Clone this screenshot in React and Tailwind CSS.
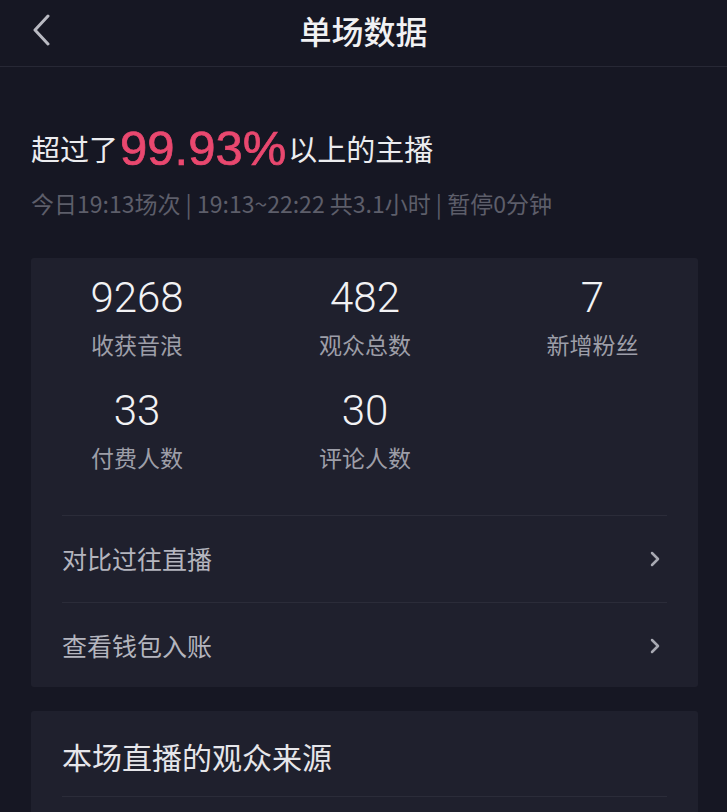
import { ChevronRight } from "lucide-react";

const STATS = [
  [
    { value: "9268", label: "收获音浪" },
    { value: "482", label: "观众总数" },
    { value: "7", label: "新增粉丝" },
  ],
  [
    { value: "33", label: "付费人数" },
    { value: "30", label: "评论人数" },
  ],
];

const COL_WIDTHS = ["w-[212px]", "w-[244px]", "w-[211px]"];

const cjk = "font-['Noto_Sans_CJK_SC',sans-serif]";

function StatRow({ items, className }) {
  return (
    <div className={`flex ${className}`}>
      {items.map((item, i) => (
        <div key={item.label} className={`${COL_WIDTHS[i]} flex flex-col items-center`}>
          <div className="h-[48px] leading-[48px] text-[42px] font-light text-[#f2f2f4] font-['Roboto',sans-serif]">
            {item.value}
          </div>
          <div className={`mt-[7px] h-[30px] leading-[30px] text-[23px] text-[#9d9ea8] ${cjk}`}>
            {item.label}
          </div>
        </div>
      ))}
    </div>
  );
}

function LinkRow({ text }) {
  return (
    <div className="h-[87px] flex items-center justify-between border-t border-[#2b2c39]">
      <span className={`text-[25px] text-[#b4b5be] ${cjk}`}>{text}</span>
      <ChevronRight className="w-6 h-6 text-[#a8a9b2]" strokeWidth={2.5} />
    </div>
  );
}

export default function App() {
  return (
    <div className="w-[727px] h-[812px] overflow-hidden bg-[#161723]">
      {/* header */}
      <div className="relative h-[67px] flex items-center justify-center pb-[6px] border-b border-[#272835]">
        <svg className="absolute left-[31px] top-[14px]" width="20" height="32" viewBox="0 0 20 32" fill="none">
          <path d="M17 2 L4 16 L17 30" stroke="#b9bac2" strokeWidth="3" strokeLinecap="round" strokeLinejoin="round" />
        </svg>
        <h1 className={`text-[32px] text-[#f1f1f3] font-medium ${cjk}`}>单场数据</h1>
      </div>

      <div className="pl-[31px] pr-[29px]">
        {/* headline */}
        <div className={`mt-[58px] h-[48px] flex items-center text-[29px] text-[#ececef] ${cjk}`}>
          <span>超过了</span>
          <span className="text-[49px] text-[#e9486f] font-['Liberation_Sans',sans-serif] [-webkit-text-stroke:0.7px_#e9486f] mx-[2px]">
            99.93%
          </span>
          <span>以上的主播</span>
        </div>
        <div className={`mt-[16px] h-[28px] leading-[28px] text-[23px] text-[#5d5e6a] whitespace-nowrap ${cjk}`}>
          今日19:13场次 | 19:13~22:22 共3.1小时 | 暂停0分钟
        </div>

        {/* stats card */}
        <div className="mt-[41px] h-[429px] bg-[#1f202d] rounded-[3px] pt-[16px]">
          <StatRow items={STATS[0]} />
          <StatRow items={STATS[1]} className="mt-[28px]" />
          <div className="mt-[43px] mx-[31px]">
            <LinkRow text="对比过往直播" />
            <LinkRow text="查看钱包入账" />
          </div>
        </div>

        {/* audience source card */}
        <div className="mt-[24px] bg-[#1f202d] rounded-[3px] pt-[25px] h-[200px]">
          <div className={`mx-[31px] h-[40px] leading-[40px] text-[30px] text-[#e6e6ea] ${cjk}`}>
            本场直播的观众来源
          </div>
          <div className="mx-[31px] mt-[20px] border-t border-[#2b2c39]" />
        </div>
      </div>
    </div>
  );
}
